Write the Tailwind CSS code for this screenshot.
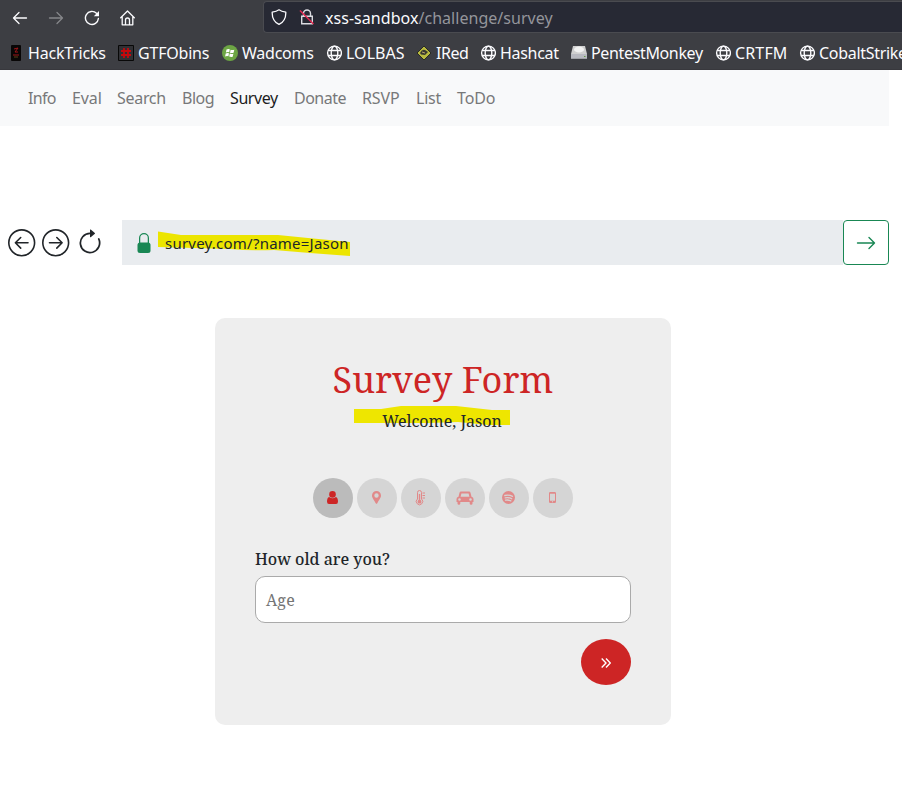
<!DOCTYPE html>
<html lang="en">
<head>
<meta charset="utf-8">
<title>Survey</title>
<script src="https://cdn.jsdelivr.net/npm/@tailwindcss/browser@4"></script>
</head>
<body class="h-[793px] overflow-hidden bg-white font-['Noto_Sans',sans-serif] text-[#212529]">
<svg class="hidden">
  <symbol id="globe" viewBox="0 0 16 16"><g fill="none" stroke="#fbfbfe" stroke-width="1.4"><circle cx="8.500" cy="8" r="6.900"/><ellipse cx="8.500" cy="8" rx="3.300" ry="6.900"/><path d="M2 5.500h13M2 10.500h13"/></g></symbol>
</svg>
<header class="h-[70px] overflow-hidden bg-[#3d3e43] border-b border-[#38383d] text-[#fbfbfe]">
  <div class="flex h-[36px] items-center">
    <div class="flex w-[263px] items-center pl-3 gap-5">
      <svg class="size-4" viewBox="0 0 16 16" fill="none" stroke="#fbfbfe" stroke-width="1.3" stroke-linecap="round" stroke-linejoin="round"><path d="M14.500 8H1.500M7 2.500L1.500 8L7 13.500"/></svg>
      <svg class="size-4" viewBox="0 0 16 16" fill="none" stroke="#85868a" stroke-width="1.3" stroke-linecap="round" stroke-linejoin="round"><path d="M1.500 8h13M9 2.500L14.500 8L9 13.500"/></svg>
      <svg class="size-4" viewBox="0 0 16 16" fill="none" stroke="#fbfbfe" stroke-width="1.4" stroke-linecap="round"><path d="M14.400 8.500A6.500 6.500 0 1 1 12.500 3.300"/><path d="M15 1v5.200H9.800z" fill="#fbfbfe" stroke="none"/></svg>
      <svg class="size-4" viewBox="0 0 16 16" fill="none" stroke="#fbfbfe" stroke-width="1.3" stroke-linejoin="round" stroke-linecap="round"><path d="M.7 7.700L7.500 1l6.800 6.700M2.200 6.500v8.300h10.600V6.500M5.500 14.500V10a2 2 0 0 1 4 0v4.500"/></svg>
    </div>
    <div class="mt-[-2px] flex h-[32px] flex-1 items-center rounded-l border border-r-0 border-[#4a4b50] bg-[#272934] pl-[7px]">
      <svg class="size-4" viewBox="0 0 16 16" fill="none" stroke="#fbfbfe" stroke-width="1.3" stroke-linejoin="round"><path d="M8 .8C6 2.300 4 2.800 1.200 3.200 1 9 3.200 13 8 15.400c4.800-2.400 7-6.400 6.800-12.200C12 2.800 10 2.300 8 .8z"/></svg>
      <svg class="ml-3 size-4" viewBox="0 0 16 16" fill="none" stroke="#dcdce2" stroke-width="1.4"><path d="M4.500 7V4.500a3.500 3.500 0 0 1 7 0V7M2.700 7.200h10.600v7.500H2.700z"/><path d="M1 1.500l13.500 13.500" stroke="#e22850" stroke-width="1.500"/></svg>
      <span class="mt-[2px] ml-[10px] text-[16px] leading-6 tracking-[0.040px] whitespace-nowrap">xss-sandbox<span class="text-[#94959b]">/challenge/survey</span></span>
    </div>
  </div>
  <div class="flex h-[34px] items-center pl-2 text-[16px] leading-6 whitespace-nowrap">
    <div class="flex w-[110px] shrink-0 items-center"><svg class="mr-1 size-4" viewBox="0 0 16 16"><rect x="3" width="10" height="16" rx="1" fill="#080606"/><path d="M6 4l4-1-3 4h3M5 10h6" stroke="#a01518" fill="none"/><path d="M6 12h4" stroke="#5a4218"/></svg><span class="tracking-[-0.2px]">HackTricks</span></div>
    <div class="flex w-[104px] shrink-0 items-center"><svg class="mr-1 size-4" viewBox="0 0 16 16"><path fill="#303034" stroke="#080808" d="M.5.500h15v15H.5z"/><path d="M6 3v10M10 3v10M3 6h10M3 10h10" stroke="#c5080c" stroke-width="1.800"/></svg><span class="tracking-[-0.2px]">GTFObins</span></div>
    <div class="flex w-[104px] shrink-0 items-center"><svg class="mr-1 size-4" viewBox="0 0 16 16"><circle cx="8" cy="8" r="8" fill="#6da544"/><path fill="#fff" d="M4.500 4.500q1.800-1 3.300-.2L7.200 7.300q-1.500-.7-3.300.2zM8.600 4.700q1.700.7 3.700 0l-.7 3q-1.800.8-3.600 0zM3.700 8.400q1.700-.9 3.300-.2l-.6 3q-1.500-.7-3.300.2zM7.800 8.600q1.700.8 3.600.1l-.7 3q-1.700.7-3.500-.1z"/></svg><span class="tracking-[-0.250px]">Wadcoms</span></div>
    <div class="flex w-[90px] shrink-0 items-center"><svg class="mr-1 size-4"><use href="#globe"/></svg><span class="tracking-[0.050px]">LOLBAS</span></div>
    <div class="flex w-[64px] shrink-0 items-center"><svg class="mr-1 size-4" viewBox="0 0 16 16"><path d="M8 1l7 7-7 7-7-7z" fill="#b8b940" stroke="#292b22"/><path d="M4 8q2-4 5-3l3 2-3 3-4-.5z" fill="#39392f"/><path d="M6 7l3 1" stroke="#b9a36b"/></svg><span class="tracking-[-0.500px]">IRed</span></div>
    <div class="flex w-[91px] shrink-0 items-center"><svg class="mr-1 size-4"><use href="#globe"/></svg><span class="tracking-[-0.3px]">Hashcat</span></div>
    <div class="flex w-[144px] shrink-0 items-center"><svg class="mr-1 size-4" viewBox="0 0 16 16"><path d="M2 1h12l2 8v4.500H0V9z" fill="#d0d0d0"/><path d="M0 9h16v4.500H0z" fill="#b9bac1"/><ellipse cx="8" cy="4.500" rx="5" ry="3" fill="#f2f2f2"/><path d="M13 11h1.500v1H13z" fill="#619d43"/></svg><span class="tracking-[-0.350px]">PentestMonkey</span></div>
    <div class="flex w-[84px] shrink-0 items-center"><svg class="mr-1 size-4"><use href="#globe"/></svg><span class="tracking-[0.150px]">CRTFM</span></div>
    <div class="flex shrink-0 items-center"><svg class="mr-1 size-4"><use href="#globe"/></svg><span class="tracking-[-0.3px]">CobaltStrike</span></div>
  </div>
</header>
<nav class="flex h-[56px] w-[889px] items-center bg-[#f8f9fa] pl-7 text-[16px] leading-6 text-[#777879] whitespace-nowrap">
  <a class="w-[44px] tracking-[-0.700px]">Info</a><a class="w-[45px] tracking-[-0.1px]">Eval</a><a class="w-[65px] tracking-[-0.3px]">Search</a><a class="w-[48px] tracking-[-0.500px]">Blog</a><a class="w-[64px] tracking-[-0.400px] text-[#1c1d1e]">Survey</a><a class="w-[68px] tracking-[-0.500px]">Donate</a><a class="w-[54px] tracking-[-0.1px]">RSVP</a><a class="w-[41px] tracking-[-0.2px]">List</a><a class="tracking-[-0.1px]">ToDo</a>
</nav>
<main class="w-[889px]">
  <div class="mt-[94px] flex h-[45px] items-center">
    <div class="flex w-[122px] items-center pl-2">
      <svg class="size-[28px]" viewBox="0 0 28 28" fill="none" stroke="#212529" stroke-width="1.600" stroke-linecap="round" stroke-linejoin="round"><circle cx="13.700" cy="13.800" r="12.900"/><path d="M20 13.800H7.700M12.700 8.500l-5.300 5.300 5.300 5.300"/></svg>
      <svg class="ml-[6px] size-[28px]" viewBox="0 0 28 28" fill="none" stroke="#212529" stroke-width="1.600" stroke-linecap="round" stroke-linejoin="round"><circle cx="13.700" cy="13.800" r="12.900"/><path d="M7.500 13.800h12.300M14.800 8.500l5.300 5.300-5.300 5.300"/></svg>
      <svg class="ml-[6px] size-[28px]" viewBox="0 0 16 16" fill="#212529"><path fill-rule="evenodd" d="M8 3a5 5 0 1 0 4.546 2.914.5.500 0 0 1 .908-.417A6 6 0 1 1 8 2z"/><path d="M8 4.466V.534a.250.250 0 0 1 .410-.192l2.360 1.966c.120.100.120.284 0 .384L8.410 4.658A.250.250 0 0 1 8 4.466"/></svg>
    </div>
    <div class="relative flex h-[45px] w-[721px] items-center bg-[#e9ecef] pl-3">
      <svg class="absolute top-[11px] left-[36px] h-[25px] w-[193px]" viewBox="0 0 193 25"><path fill="#ece500" d="M0 .500L23 4h97l30 3 42 4v14l-40-3-36-3q-22 1-44-1L0 16z"/></svg>
      <svg class="size-5" viewBox="0 0 16 16" fill="#198754"><path d="M8 0a4 4 0 0 0-4 4v4h1V4a3 3 0 0 1 6 0v4h1V4a4 4 0 0 0-4-4z"/><rect x="2.800" y="7.500" width="10.400" height="8.500" rx="2"/></svg>
      <span class="relative ml-[11px] text-[15px] leading-6 tracking-[0.230px] whitespace-nowrap">survey.com/?name=Jason</span>
    </div>
    <button class="flex h-[45px] w-[46px] items-center justify-center rounded border border-[#198754]"><svg class="size-5" viewBox="0 0 20 20" fill="none" stroke="#198754" stroke-width="1.400" stroke-linecap="round" stroke-linejoin="round"><path d="M1.500 10h17M13 4.500l5.500 5.500-5.500 5.500"/></svg></button>
  </div>
  <section class="relative mt-[53px] ml-[215px] h-[407px] w-[456px] rounded-[10px] bg-[#eee] px-10 pt-10 font-['Noto_Serif','DejaVu_Serif_Condensed','DejaVu_Serif',serif]">
    <svg class="absolute top-[88px] left-[139px] h-[19px] w-[156px]" viewBox="0 0 156 19"><path fill="#eee600" d="M0 3h27L47 0h55l36 4h18v15h-22l-30-3-30 1H0z"/></svg>
    <h1 class="relative top-[-1px] h-[46px] text-center text-[36px] leading-[46px] text-[#cd2525] whitespace-nowrap">Survey Form</h1>
    <p class="relative left-[-1px] mt-[5px] text-center text-[16px] leading-6 whitespace-nowrap">Welcome, Jason</p>
    <div class="mt-[45px] flex justify-center gap-1">
      <span class="flex size-10 items-center justify-center rounded-full bg-[#bbb]"><svg class="size-4" viewBox="0 0 16 16" fill="#cd2525"><circle cx="7.500" cy="4.400" r="3.300"/><path d="M4.100 6.900Q7.500 9.700 10.900 6.900q2.100.8 2.100 4.600 0 2.500-2 2.500H4q-2 0-2-2.500 0-3.800 2.100-4.600z"/></svg></span>
      <span class="flex size-10 items-center justify-center rounded-full bg-[#d5d5d5]"><svg class="size-4" viewBox="0 0 16 16" fill="#e18989"><path fill-rule="evenodd" d="M7.500 1A4.500 4.500 0 0 0 3 5.500c0 2 1 3 3.700 7.700q.8 1.300 1.600 0C11 8.500 12 7.500 12 5.500A4.500 4.500 0 0 0 7.500 1zm0 2.300a2.200 2.200 0 1 1 0 4.400 2.200 2.200 0 0 1 0-4.400z"/></svg></span>
      <span class="flex size-10 items-center justify-center rounded-full bg-[#d5d5d5]"><svg class="size-4" viewBox="0 0 16 16" fill="none" stroke="#e18989"><path d="M4.500 9V2.500a2 2 0 0 1 4 0V9a3.200 3.200 0 1 1-4 0zM9.500 3h2.500M9.500 5.500h2.500M9.500 8h2.500"/><path d="M6.500 4v7" stroke-width="1.400"/><circle cx="6.500" cy="11.700" r="1.900" fill="#e18989" stroke="none"/></svg></span>
      <span class="flex size-10 items-center justify-center rounded-full bg-[#d5d5d5]"><svg class="h-[15px] w-[18px]" viewBox="0 0 18 15" fill="#e18989"><path fill-rule="evenodd" d="M5 .5h8q1.200 0 1.500 1.200l1 4q2 .3 2 2.200v3h-1v1.500q0 1.400-1.400 1.400t-1.400-1.400v-1.500H4.300v1.500q0 1.400-1.400 1.400t-1.400-1.400v-1.500h-1v-3q0-1.900 2-2.200l1-4Q3.800.5 5 .5zm.4 1.900L4.600 5.700h8.800l-.8-3.300zM3.500 7.200a1.300 1.300 0 1 0 0 2.600 1.300 1.300 0 0 0 0-2.600zm11 0a1.300 1.300 0 1 0 0 2.600 1.300 1.300 0 0 0 0-2.600z"/></svg></span>
      <span class="flex size-10 items-center justify-center rounded-full bg-[#d5d5d5]"><svg class="size-4" viewBox="0 0 16 16" fill="none"><circle cx="7.500" cy="7.500" r="6.500" fill="#e18989"/><path stroke="#d5d5d5" stroke-linecap="round" stroke-width="1.300" d="M3.800 5.500q4-1 7.700.8M4.200 7.900q3.500-.8 6.500.8M4.500 10.200q3-.6 5.300.7"/></svg></span>
      <span class="flex size-10 items-center justify-center rounded-full bg-[#d5d5d5]"><svg class="size-4" viewBox="0 0 16 16" fill="#e18989"><path fill-rule="evenodd" d="M5.300 2h4.400Q11 2 11 3.300v8.400Q11 13 9.700 13H5.300Q4 13 4 11.700V3.300Q4 2 5.300 2zM5 3.800v6.900h5V3.800zm2 7.500v1h1v-1z"/></svg></span>
    </div>
    <label class="mt-[29px] block text-[16px] leading-6 font-medium tracking-[-0.020px] whitespace-nowrap">How old are you?</label>
    <div class="mt-[5px] flex h-[47px] items-center rounded-[10px] border border-[#aaa] bg-white pl-[10px] text-[16px] tracking-[0.300px] text-[#757575]">Age</div>
    <button class="mt-4 ml-auto flex h-[46px] w-[50px] items-center justify-center rounded-[50%] bg-[#cd2525]"><svg class="mt-[2px] mr-px size-[10px]" viewBox="0 0 10 10" fill="none" stroke="#fff" stroke-width="1.400"><path d="M.7.600L5 5 .7 9.400M5 .6L9.300 5 5 9.400"/></svg></button>
  </section>
</main>
</body>
</html>
